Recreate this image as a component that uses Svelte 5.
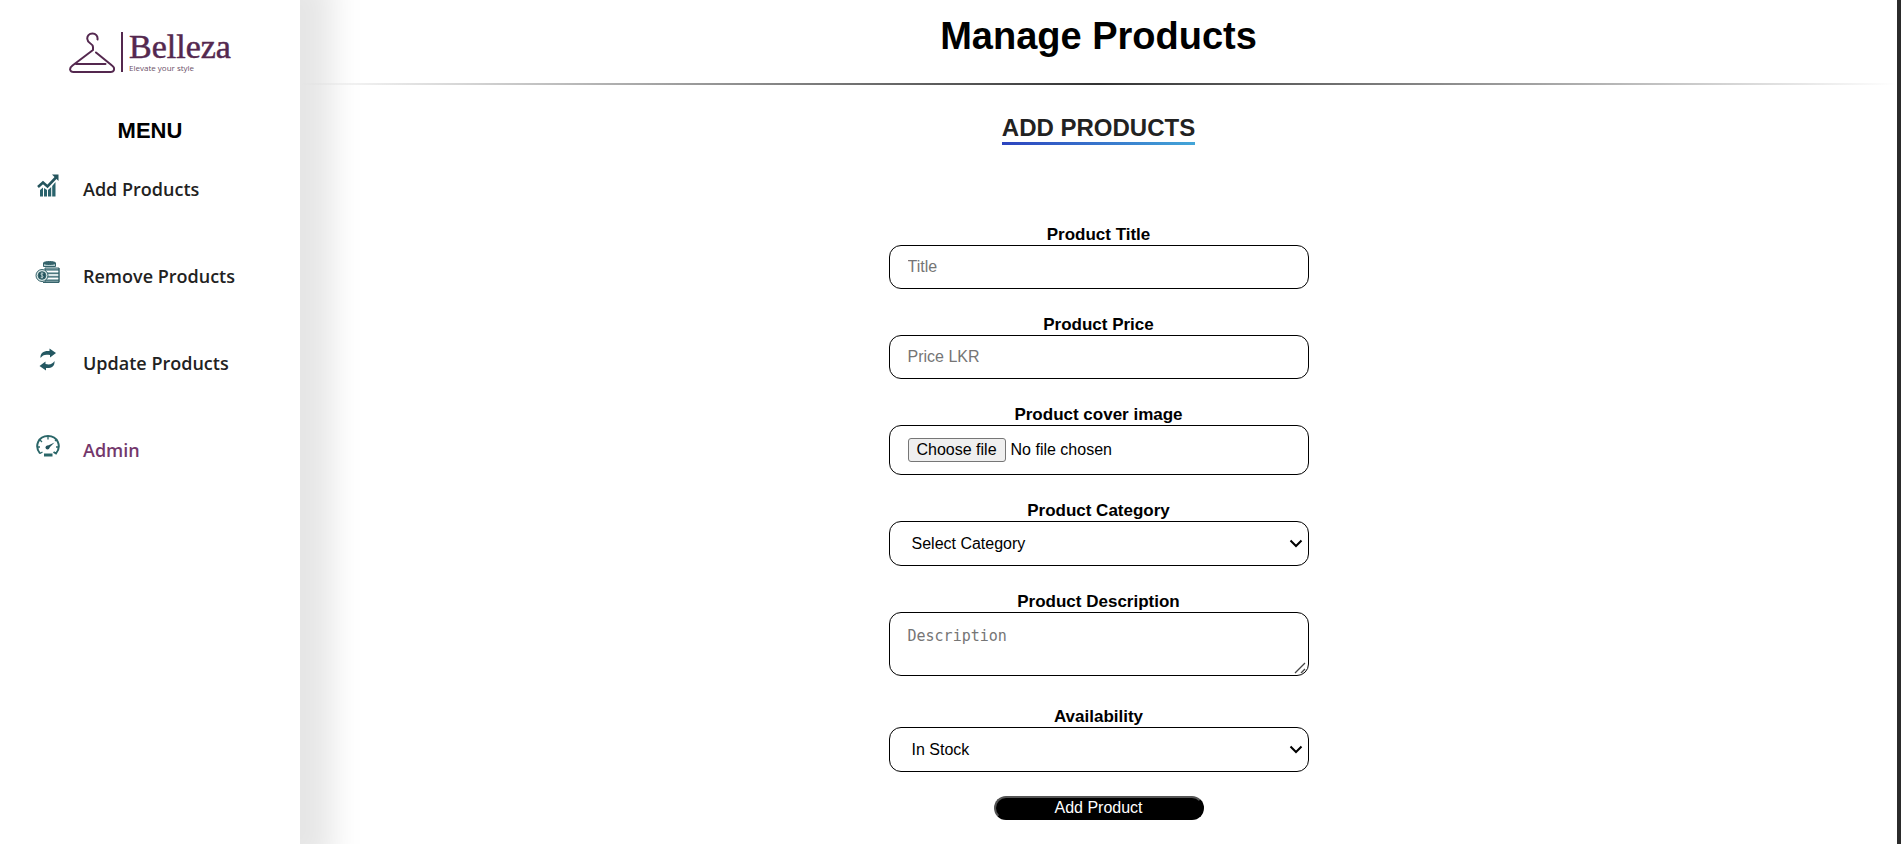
<script>
  const menu = [
    { label: 'Add Products', icon: 'chart' },
    { label: 'Remove Products', icon: 'coins' },
    { label: 'Update Products', icon: 'refresh' },
    { label: 'Admin', icon: 'gauge', active: true }
  ];
  let title = $state('');
  let price = $state('');
  let category = $state('');
  let description = $state('');
  let availability = $state('In Stock');
</script>

<div class="page">
  <aside>
    <a class="logo" href="#home" aria-label="Belleza">
      <svg viewBox="0 0 46 42" fill="none" stroke="#54284f" stroke-width="2" stroke-linecap="round" stroke-linejoin="round">
        <path d="M28.500 7.500C29 4 26.500 1.500 23.500 1.500C20 1.500 18 4 18.300 7C18.600 12 24 11 24 15V18L3.500 33.500C-0.500 36.500 1 40 4.500 40H41.500C45.500 40 46.500 36 43 33.500L27 20.500M7 32H36.500" />
      </svg>
      <span class="brand">
        <span class="name">Belleza</span>
        <span class="tagline">Elevate your style</span>
      </span>
    </a>
    <h2>MENU</h2>
    <nav>
      {#each menu as item}
        <a href="#{item.icon}" class:active={item.active}>
          <svg viewBox="0 0 26 26" aria-hidden="true">
            {#if item.icon === 'chart'}
              <path d="M5 17l3-2.500v9H5zM9 15l3 2v6.500H9zM13 17l3.200-3v9.500H13zM17.200 13l3.300-4v14.500h-3.300z" fill="#2a636c" />
              <path d="M3 14l5-4.500 4.500 4L21 4.500" fill="none" stroke="#24545d" stroke-width="2.600" />
              <path d="M17 1.500h6.500V8z" fill="#24545d" />
            {:else if item.icon === 'coins'}
              <g stroke="#35636b" fill="#b5ced0">
                <path d="M10 8h14v14H10z" />
                <path d="M10.500 11.500h13M10.500 15h13M10.500 18.500h13" stroke="#fff" />
                <path d="M10 9.800h14M10 13.300h14M10 16.800h14M10 20.300h14M24 8v14.500H8" fill="none" />
                <path d="M8.500 3v3.500h12V3z" />
                <ellipse cx="14.500" cy="3" rx="6" ry="1.500" fill="#35636b" />
                <circle cx="7" cy="15.500" r="6" fill="#d5e4e3" />
                <circle cx="7" cy="15.500" r="3.800" fill="#24545d" />
                <path d="M8.300 13.500c-2-1-3 .200-2 1.400l1.300.900c1.200 1.200 0 2.400-2 1.400M7 12.500v6" fill="none" stroke="#d5e4e3" stroke-width=".8" />
              </g>
            {:else if item.icon === 'refresh'}
              <g fill="#245862">
                <path d="M5.500 11C5 5.500 9 3.500 14.500 4V1.500L21 6 15 10.500V8C10 7 7.500 8 5.500 11z" />
                <path d="M19.500 14C20 19.500 16 21.500 11 21V23.500L4.500 19 10.500 14.500V17C15 18 17.500 17 19.500 14z" />
              </g>
            {:else}
              <g fill="none" stroke="#2a6668" stroke-width="2">
                <path d="M5 19.500C-1 12 3.500 2 13 2S27 12 21 19.500L18.500 18" />
                <path d="M5 19.500L7.500 18M2 13h3M5 6l2 2M13 2v3.500M21 6l-1 1M24 13h-3" stroke-width="1.300" />
                <path d="M9 21h8.500" stroke-width="3" />
              </g>
              <circle cx="12.500" cy="13.500" r="2" fill="#24545d" />
              <path d="M12 12l7.500-3.500-6 6z" fill="#24545d" />
            {/if}
          </svg>
          <span>{item.label}</span>
        </a>
      {/each}
    </nav>
  </aside>

  <main>
    <h1>Manage Products</h1>
    <hr />
    <h3>ADD PRODUCTS</h3>
    <form onsubmit={(e) => e.preventDefault()}>
      <div class="field">
        <label for="title">Product Title</label>
        <input id="title" type="text" placeholder="Title" bind:value={title} />
      </div>
      <div class="field">
        <label for="price">Product Price</label>
        <input id="price" type="text" placeholder="Price LKR" bind:value={price} />
      </div>
      <div class="field">
        <label for="cover">Product cover image</label>
        <div class="file">
          <input id="cover" class="hidden-file" type="file" accept="image/*" />
          <label class="choose" for="cover">Choose file</label>
          <span>No file chosen</span>
        </div>
      </div>
      <div class="field">
        <label for="category">Product Category</label>
        <select id="category" bind:value={category}>
          <option value="">Select Category</option>
        </select>
      </div>
      <div class="field area">
        <label for="description">Product Description</label>
        <textarea id="description" placeholder="Description" bind:value={description}></textarea>
      </div>
      <div class="field last">
        <label for="availability">Availability</label>
        <select id="availability" bind:value={availability}>
          <option>In Stock</option>
        </select>
      </div>
      <button type="submit">Add Product</button>
    </form>
  </main>
</div>

<style>
  :global(body) {
    margin: 0;
    background: #fff;
  }
  .page, .page * {
    box-sizing: border-box;
  }
  .page {
    display: flex;
    min-height: 100vh;
    overflow: hidden;
    border-right: 4px solid #2b2b2b;
    font-family: "Liberation Sans", Arial, sans-serif;
    color: #000;
  }
  aside {
    flex: 0 0 300px;
    background: #fff;
    box-shadow: 8px 0 30px 24px rgba(0, 0, 0, 0.1);
  }
  .logo {
    display: flex;
    width: max-content;
    margin: 32px 0 0 69px;
    height: 42px;
    gap: 6px;
    color: #54284f;
    text-decoration: none;
  }
  .logo svg {
    width: 46px;
    height: 42px;
  }
  .brand {
    display: flex;
    flex-direction: column;
    height: 40px;
    padding-left: 6px;
    border-left: 2px solid #54284f;
  }
  .name {
    font: 34px/30px "Liberation Serif", serif;
    -webkit-text-stroke: 0.5px #54284f;
  }
  .tagline {
    font: 8px/12px "Open Sans", sans-serif;
    color: #6b5068;
  }
  h2 {
    margin: 43px 0 0;
    font-size: 22px;
    line-height: 28px;
    text-align: center;
  }
  nav {
    display: flex;
    flex-direction: column;
    gap: 47px;
    margin-top: 25px;
    padding-left: 35px;
  }
  nav a {
    display: flex;
    gap: 22px;
    height: 40px;
    color: #222;
    font: 600 18px/38px "Open Sans", "Noto Sans", sans-serif;
    text-decoration: none;
  }
  nav a.active {
    color: #74386c;
  }
  nav svg {
    width: 26px;
    height: 26px;
    margin-top: 3px;
  }
  main {
    flex: 1;
    display: flex;
    flex-direction: column;
    align-items: center;
  }
  h1 {
    margin: 14px 0 0;
    font-size: 38px;
    line-height: 44px;
  }
  hr {
    width: 100%;
    height: 2px;
    margin: 25px 0 0;
    border: 0;
    background: linear-gradient(to right, transparent, #333, transparent);
  }
  h3 {
    margin: 29px 0 0;
    padding-bottom: 1px;
    border-bottom: 3px solid;
    border-image: linear-gradient(to right, #2c43bf, #43a6d8) 1;
    color: #222;
    font-size: 24px;
    line-height: 27px;
  }
  form {
    display: flex;
    flex-direction: column;
    align-items: center;
    width: 420px;
    max-width: 100%;
    margin-top: 80px;
  }
  .field {
    width: 100%;
    margin-bottom: 26px;
    text-align: center;
  }
  .area {
    margin-bottom: 31px;
  }
  .last {
    margin-bottom: 24px;
  }
  .field > label {
    display: block;
    padding-bottom: 1px;
    font-size: 17px;
    font-weight: bold;
    line-height: 19px;
  }
  .field > input, select, textarea, .file {
    display: block;
    width: 100%;
    height: 44px;
    padding: 0 18px;
    border: 1px solid #000;
    border-radius: 12px;
    background: #fff;
    color: #000;
    font: 16px/20px "Liberation Sans", Arial, sans-serif;
  }
  .field > input::placeholder, textarea::placeholder {
    color: #757575;
  }
  select {
    height: 45px;
    padding: 0 22px;
    appearance: none;
    background: #fff url("data:image/svg+xml,%3Csvg xmlns='http://www.w3.org/2000/svg' width='14' height='9' fill='none' stroke='%23000' stroke-width='2'%3E%3Cpath d='M1.500 1.500L7 7l5.500-5.500'/%3E%3C/svg%3E") no-repeat right 5px center;
  }
  .file {
    display: flex;
    align-items: center;
    gap: 5px;
    height: 50px;
  }
  .hidden-file {
    position: absolute;
    width: 1px;
    height: 1px;
    opacity: 0;
  }
  .choose {
    padding: 1px 8px;
    border: 1px solid #767676;
    border-radius: 3px;
    background: #efefef;
  }
  textarea {
    height: 64px;
    padding: 14px 18px;
    resize: none;
    background: #fff url("data:image/svg+xml,%3Csvg xmlns='http://www.w3.org/2000/svg' width='13' height='13' fill='none' stroke='%23444' stroke-width='1.300'%3E%3Cpath d='M1 12L11 2M7 12l4-4'/%3E%3C/svg%3E") no-repeat right 1px bottom 1px;
    font: 15px/18px "DejaVu Sans Mono", monospace;
  }
  button {
    width: 50%;
    height: 24px;
    padding: 0;
    border: 2px outset #000;
    border-radius: 12px;
    background: #000;
    color: #fff;
    font: 16px/18px "Liberation Sans", Arial, sans-serif;
  }
</style>
